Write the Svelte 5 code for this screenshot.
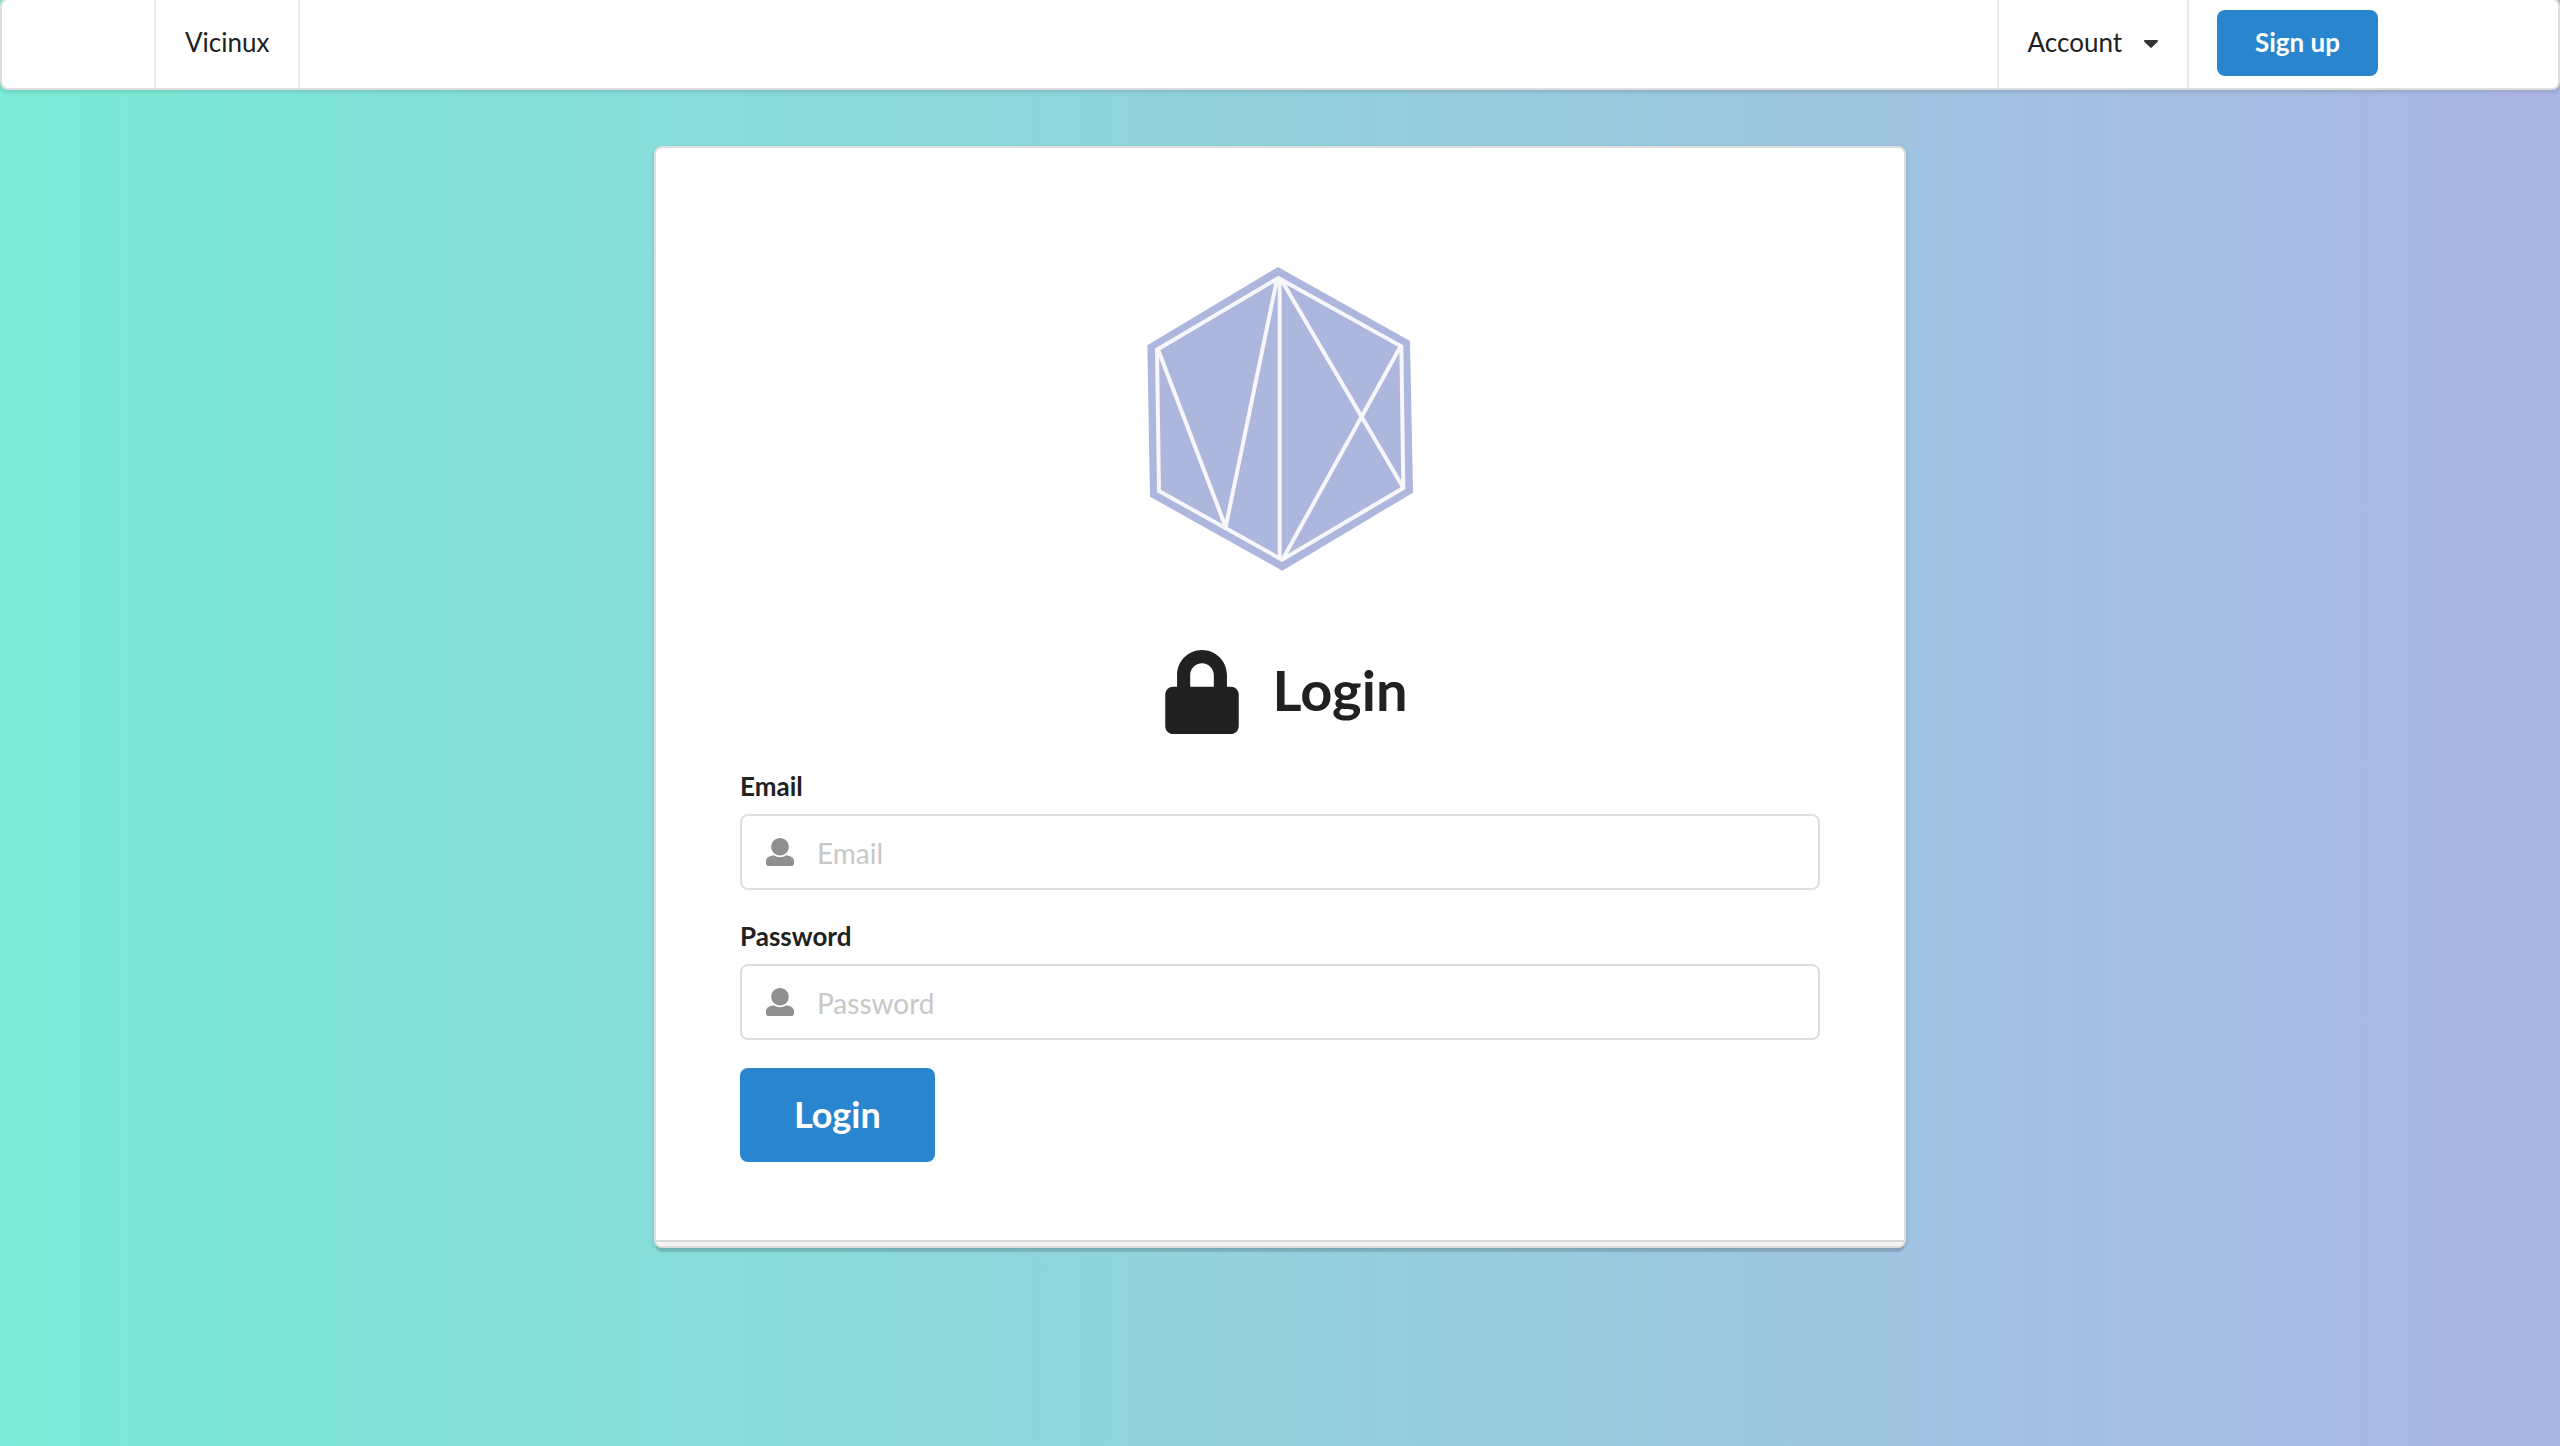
<script lang="ts">
    let email = $state('');
    let password = $state('');

    const userPath = 'M256 0c88.366 0 160 71.634 160 160s-71.634 160-160 160S96 248.366 96 160 167.634 0 256 0zm183.283 333.821l-71.313-17.828c-74.923 53.89-165.738 41.864-223.94 0l-71.313 17.828C29.981 344.505 0 382.903 0 426.955V464c0 26.51 21.49 48 48 48h416c26.51 0 48-21.49 48-48v-37.045c0-44.052-29.981-82.45-72.717-93.134z';
    const lockPath = 'M400 224h-24v-72C376 68.2 307.8 0 224 0S72 68.2 72 152v72H48c-26.5 0-48 21.5-48 48v192c0 26.5 21.5 48 48 48h352c26.5 0 48-21.5 48-48V272c0-26.5-21.5-48-48-48zm-104 0H152v-72c0-39.7 32.3-72 72-72s72 32.3 72 72v72z';

    function handleSubmit(event: SubmitEvent) {
        event.preventDefault();
    }
</script>

<div class="page">
    <nav class="menu">
        <div class="container">
            <a class="item" href="/">Vicinux</a>
            <div class="right">
                <button class="item" type="button">
                    Account
                    <svg class="caret" viewBox="0 0 14 8" aria-hidden="true">
                        <path d="M1 0h12a1 1 0 0 1 .7 1.7L7.7 7.6a1 1 0 0 1-1.4 0L.3 1.7A1 1 0 0 1 1 0z" />
                    </svg>
                </button>
                <a class="primary signup" href="/signup">Sign up</a>
            </div>
        </div>
    </nav>

    <main class="card">
        <div class="content">
            <svg class="logo" viewBox="72 42 816 924" role="img" aria-label="Vicinux logo">
                <path class="hex" d="M474 51L870 273L879 728L487 962L90 740L82 286Z" />
                <g class="lines">
                    <path d="M475 84L844 289L850 714L486 929L117 723L111 299Z" />
                    <path stroke-linejoin="bevel" d="M115 301L317 831L471 88" />
                    <path d="M479 86V928" />
                    <path d="M482 86L849 712" />
                    <path d="M841 290L488 928" />
                </g>
            </svg>

            <h2>
                <svg class="lock" viewBox="0 0 448 512" aria-hidden="true">
                    <path d={lockPath} />
                </svg>
                Login
            </h2>

            <form onsubmit={handleSubmit}>
                <div class="field">
                    <label for="email">Email</label>
                    <div class="input">
                        <svg viewBox="0 0 512 512" aria-hidden="true"><path d={userPath} /></svg>
                        <input id="email" type="email" placeholder="Email" bind:value={email} />
                    </div>
                </div>
                <div class="field">
                    <label for="password">Password</label>
                    <div class="input">
                        <svg viewBox="0 0 512 512" aria-hidden="true"><path d={userPath} /></svg>
                        <input id="password" type="password" placeholder="Password" bind:value={password} />
                    </div>
                </div>
                <button class="primary submit" type="submit">Login</button>
            </form>
        </div>
        <div class="extra"></div>
    </main>
</div>

<style>
    .page {
        --text: #212121;
        --border: #dededf;
        --blue: #2986ce;
        box-sizing: border-box;
        min-height: 100vh;
        display: flex;
        flex-direction: column;
        align-items: center;
        background: linear-gradient(to right, #7aebd6, #acb6e4);
        color: var(--text);
        font-family: Lato, "Liberation Sans", sans-serif;
        font-size: 28px;
    }

    .page :global(*) {
        box-sizing: border-box;
    }

    .menu {
        width: 100%;
        margin-top: -2px;
        border: 2px solid var(--border);
        border-radius: 8px;
        background: #fff;
        box-shadow: 0 2px 4px rgba(34, 36, 38, 0.15);
    }

    .container {
        display: flex;
        justify-content: space-between;
        height: 88px;
        padding: 0 152px;
    }

    .right {
        display: flex;
        align-items: center;
    }

    .item {
        display: flex;
        align-items: center;
        height: 100%;
        padding: 0 29px 4px;
        border: 0;
        border-right: 2px solid #e9e9e9;
        border-left: 2px solid #e9e9e9;
        background: none;
        color: inherit;
        font-family: inherit;
        font-size: 26px;
        text-decoration: none;
        cursor: pointer;
    }

    .caret {
        width: 14px;
        height: 8px;
        margin: 4px 0 0 22px;
        fill: #333;
    }

    .primary {
        display: flex;
        align-items: center;
        justify-content: center;
        border: 0;
        border-radius: 8px;
        background: var(--blue);
        color: #fff;
        font-family: inherit;
        font-weight: 700;
        text-decoration: none;
        cursor: pointer;
    }

    .signup {
        height: 66px;
        margin: 0 28px 2px;
        padding: 0 38px 2px;
        font-size: 26px;
    }

    .card {
        width: 100%;
        max-width: 1252px;
        margin: 56px 0;
        border: 2px solid var(--border);
        border-radius: 8px;
        background: #fff;
        box-shadow: 0 2px 4px rgba(34, 36, 38, 0.15), 0 6px 0 -2px rgba(34, 36, 38, 0.12);
    }

    .content {
        display: flex;
        flex-direction: column;
        align-items: center;
        padding: 116px 84px 78px;
    }

    .logo {
        width: 272px;
        height: 308px;
    }

    .hex {
        fill: #adb6dc;
    }

    .lines {
        fill: none;
        stroke: #f6f7fa;
        stroke-width: 12;
    }

    h2 {
        display: flex;
        align-items: flex-start;
        gap: 34px;
        margin: 78px 0 34px;
        padding-left: 12px;
        font-size: 56px;
        font-weight: 700;
        line-height: 80px;
    }

    .lock {
        width: 74px;
        height: 84px;
        fill: var(--text);
    }

    form {
        width: 100%;
    }

    .field {
        margin-bottom: 28px;
    }

    label {
        display: block;
        margin-bottom: 10px;
        font-size: 26px;
        font-weight: 700;
        line-height: 36px;
    }

    .input {
        display: flex;
        align-items: center;
        gap: 23px;
        height: 76px;
        padding: 0 24px;
        border: 2px solid var(--border);
        border-radius: 8px;
    }

    .input svg {
        width: 28px;
        height: 28px;
        fill: #909090;
    }

    input {
        flex: 1;
        min-width: 0;
        padding: 2px 0 0;
        border: 0;
        outline: 0;
        background: none;
        color: inherit;
        font-family: inherit;
        font-size: 28px;
        line-height: 34px;
    }

    input::placeholder {
        color: #c7c7c7;
        opacity: 1;
    }

    .submit {
        height: 94px;
        padding: 0 54px 2px;
        font-size: 36px;
    }

    .extra {
        height: 6px;
        border-top: 2px solid #d8d8d8;
        border-radius: 0 0 6px 6px;
        background: #f5f5f5;
    }
</style>
